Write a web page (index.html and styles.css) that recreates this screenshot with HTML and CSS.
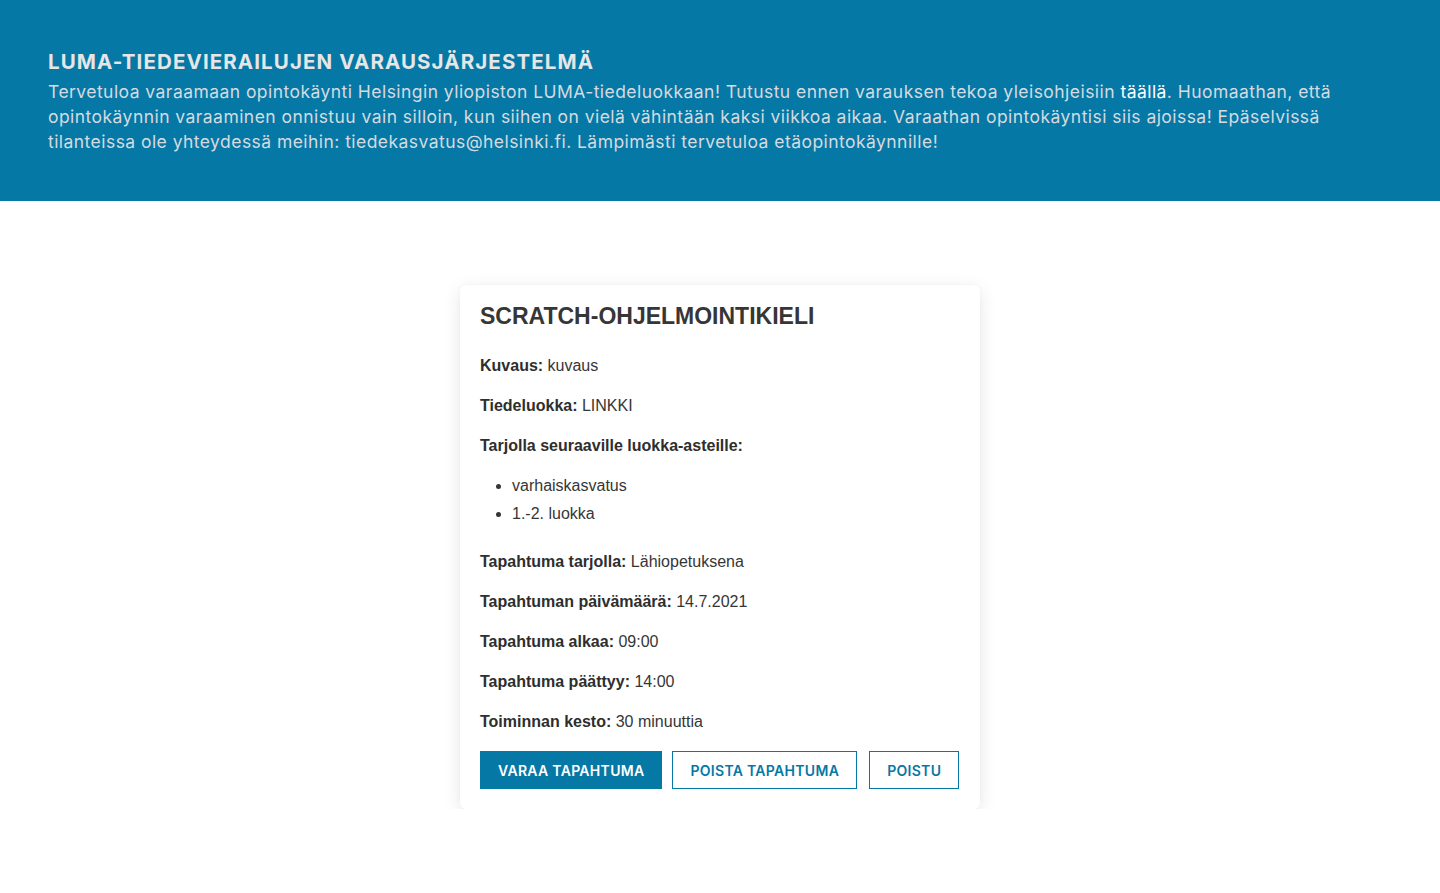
FILE: index.html
```html
<!DOCTYPE html>
<html lang="fi">
<head>
<meta charset="utf-8">
<title>LUMA</title>
<link rel="stylesheet" href="styles.css">
</head>
<body>
<header class="hero">
  <h1 class="hero-title">LUMA-TIEDEVIERAILUJEN VARAUSJÄRJESTELMÄ</h1>
  <p class="hero-text">Tervetuloa varaamaan opintokäynti Helsingin yliopiston LUMA-tiedeluokkaan! Tutustu ennen varauksen tekoa yleisohjeisiin <a class="hero-link" href="#">täällä</a>. Huomaathan, että opintokäynnin varaaminen onnistuu vain silloin, kun siihen on vielä vähintään kaksi viikkoa aikaa. Varaathan opintokäyntisi siis ajoissa! Epäselvissä tilanteissa ole yhteydessä meihin: tiedekasvatus@helsinki.fi. Lämpimästi tervetuloa etäopintokäynnille!</p>
</header>
<main class="main">
  <section class="card">
    <h2 class="card-title">SCRATCH-OHJELMOINTIKIELI</h2>
    <p class="row"><strong>Kuvaus:</strong> kuvaus</p>
    <p class="row"><strong>Tiedeluokka:</strong> LINKKI</p>
    <p class="row"><strong>Tarjolla seuraaville luokka-asteille:</strong></p>
    <ul class="grades">
      <li>varhaiskasvatus</li>
      <li>1.-2. luokka</li>
    </ul>
    <p class="row"><strong>Tapahtuma tarjolla:</strong> Lähiopetuksena</p>
    <p class="row"><strong>Tapahtuman päivämäärä:</strong> 14.7.2021</p>
    <p class="row"><strong>Tapahtuma alkaa:</strong> 09:00</p>
    <p class="row"><strong>Tapahtuma päättyy:</strong> 14:00</p>
    <p class="row row-last"><strong>Toiminnan kesto:</strong> 30 minuuttia</p>
    <div class="actions">
      <button class="btn btn-primary">VARAA TAPAHTUMA</button>
      <button class="btn btn-outline">POISTA TAPAHTUMA</button>
      <button class="btn btn-outline btn-last">POISTU</button>
    </div>
  </section>
</main>
</body>
</html>
```

FILE: styles.css
```css
* { box-sizing: border-box; }
html, body { margin: 0; padding: 0; background: #fff; }
body { font-family: "Liberation Sans", Arial, sans-serif; }

.hero {
  background: #0578a6;
  height: 201px;
  padding: 49px 48px 0 48px;
  font-family: Inter, Roboto, "Liberation Sans", sans-serif;
}
.hero-title {
  margin: 0 0 4px 0;
  font-size: 20.5px;
  font-weight: 700;
  letter-spacing: 1.1px;
  line-height: 26px;
  color: #e6e6e6;
}
.hero-text {
  margin: 0;
  font-size: 17.5px;
  letter-spacing: 0.45px;
  line-height: 25px;
  color: #d5dbe0;
  font-weight: 400;
}
.hero-link { color: #ffffff; text-decoration: none; }

.main {
  display: flex;
  justify-content: center;
  padding-top: 84px;
}
.card {
  width: 520px;
  background: #fff;
  border-radius: 6px;
  box-shadow: 0 4px 18px rgba(0,0,0,0.10), 0 0 2px rgba(0,0,0,0.04);
  padding: 18px 20px 20px 20px;
  color: #363636;
}
.card-title {
  margin: 0 0 25px 0;
  font-size: 23px;
  line-height: 26px;
  font-weight: 700;
  color: #363636;
}
.row {
  margin: 0 0 16px 0;
  font-size: 16px;
  line-height: 24px;
}
.row-last { margin-bottom: 17px; }
.row strong { color: #2e2e2e; }
.grades {
  margin: -2px 0 22px 0;
  padding-left: 32px;
  font-size: 16px;
  line-height: 28px;
}
.actions {
  display: flex;
  gap: 10px;
}
.btn {
  font-family: Inter, Roboto, "Liberation Sans", sans-serif;
  font-size: 14px;
  font-weight: 600;
  letter-spacing: 0.3px;
  height: 38px;
  padding: 0 17px;
  border: 1px solid #0578a6;
  border-radius: 0;
  cursor: pointer;
}
.btn-primary { background: #0578a6; color: #fff; }
.btn-outline { background: #fff; color: #0578a6; }
.btn-last { margin-left: 2px; }
```
